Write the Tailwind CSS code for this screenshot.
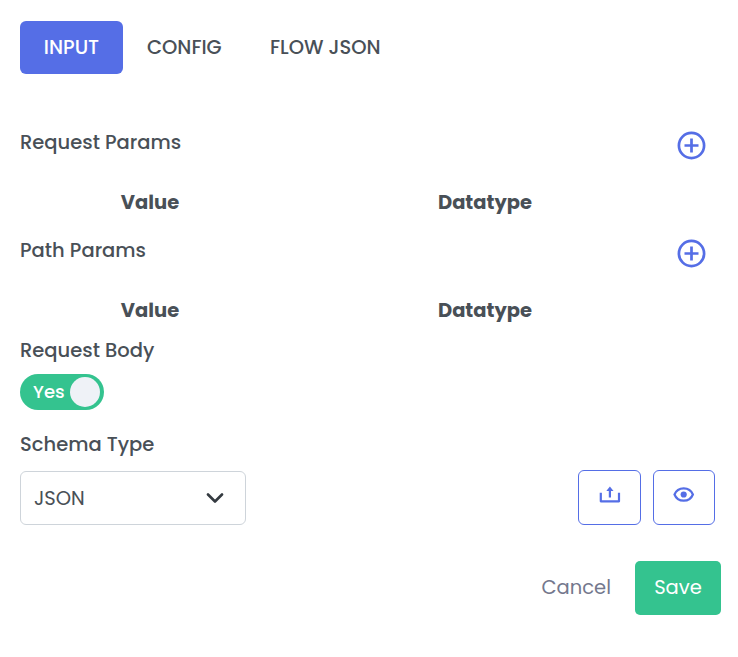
<!DOCTYPE html>
<html lang="en">
<head>
<meta charset="utf-8">
<title>Request settings</title>
<script src="https://cdn.jsdelivr.net/npm/@tailwindcss/browser@4"></script>
</head>
<body class="bg-white">
<main class="h-[657px] w-[738px] overflow-hidden bg-white pt-[21px] pl-5 font-[Poppins,Inter,sans-serif] text-[19.5px] leading-[30px] text-[#495057]">
  <nav class="flex h-[53px] items-center font-medium">
    <button class="flex h-full w-[103px] items-center justify-center rounded-[6px] bg-[#556ee6] text-white">INPUT</button>
    <button class="h-full w-[123px] px-6 text-left whitespace-nowrap">CONFIG</button>
    <button class="h-full w-[158px] px-6 text-left whitespace-nowrap">FLOW JSON</button>
  </nav>

  <section class="mt-[53px] h-[108px] w-[695px]">
    <div class="flex h-[60px] items-start justify-between">
      <h2 class="pt-px font-medium">Request Params</h2>
      <svg class="mt-[4px] mr-[9px] size-[29px]" viewBox="0 0 29 29" fill="none" stroke="#556ee6" stroke-width="2.7"><circle cx="14.5" cy="14.5" r="12.6"/><path d="M14.5 7.5v14M7.5 14.5h14"/></svg>
    </div>
    <div class="flex pt-px font-bold"><span class="w-[260px] text-center">Value</span><span class="w-[410px] text-center">Datatype</span></div>
  </section>

  <section class="h-[108px] w-[695px]">
    <div class="flex h-[60px] items-start justify-between">
      <h2 class="pt-px font-medium">Path Params</h2>
      <svg class="mt-[4px] mr-[9px] size-[29px]" viewBox="0 0 29 29" fill="none" stroke="#556ee6" stroke-width="2.7"><circle cx="14.5" cy="14.5" r="12.6"/><path d="M14.5 7.5v14M7.5 14.5h14"/></svg>
    </div>
    <div class="flex pt-px font-bold"><span class="w-[260px] text-center">Value</span><span class="w-[410px] text-center">Datatype</span></div>
  </section>

  <section class="-mt-2 h-[94px]">
    <h2 class="pt-px font-medium">Request Body</h2>
    <div class="mt-[8px] flex h-9 w-[84px] items-center justify-between rounded-full bg-[#34c38f] pr-1 pl-[13px] text-[18px] font-medium text-white"><span>Yes</span><span class="size-[30px] rounded-full bg-[#eff2f7]"></span></div>
  </section>

  <section class="h-[96px] w-[695px]">
    <h2 class="pt-px font-medium">Schema Type</h2>
    <div class="mt-[10px] flex h-[55px] items-center">
      <div class="mt-px flex h-[54px] w-[226px] items-center justify-between rounded-[6px] border border-[#ced4da] pr-[21px] pl-[13px]">
        <span class="pt-px">JSON</span>
        <svg class="h-[11px] w-[18px]" viewBox="0 0 18 11" fill="none" stroke="#343a40" stroke-width="2.6" stroke-linecap="round" stroke-linejoin="round"><path d="M2 1.500l7 7 7-7"/></svg>
      </div>
      <button class="ml-auto flex h-[55px] w-[63px] justify-center rounded-[6px] border border-[#556ee6] pt-[15px]">
        <svg class="h-[18px] w-[22px]" viewBox="0 0 22 18" fill="none" stroke="#556ee6" stroke-width="2.2" stroke-linejoin="round"><path d="M1.800 6.800v8.500h18.200V6.800M10.900 11.500V4"/><path d="M7.300 5L10.900.6 14.500 5z" fill="#556ee6" stroke="none"/></svg>
      </button>
      <button class="ml-3 flex h-[55px] w-[62px] justify-center rounded-[6px] border border-[#556ee6] pt-[16px]">
        <svg class="-ml-px h-[15px] w-[22px]" viewBox="0 0 22 15" fill="none" stroke="#556ee6" stroke-width="2.200"><path d="M1.500 7.500C3 3.700 6.500 1.300 10.700 1.300s7.700 2.400 9.200 6.200c-1.500 3.800-5 6.200-9.200 6.200S3 11.300 1.500 7.500z"/><circle cx="10.700" cy="7.500" r="3.100" fill="#556ee6" stroke="none"/></svg>
      </button>
    </div>
  </section>

  <footer class="mt-[36px] flex h-[54px] w-[701px] items-center justify-end">
    <button class="mr-[24px] text-[#74788d]">Cancel</button>
    <button class="h-full w-[86px] rounded-[5px] bg-[#34c38f] text-white">Save</button>
  </footer>
</main>
</body>
</html>
